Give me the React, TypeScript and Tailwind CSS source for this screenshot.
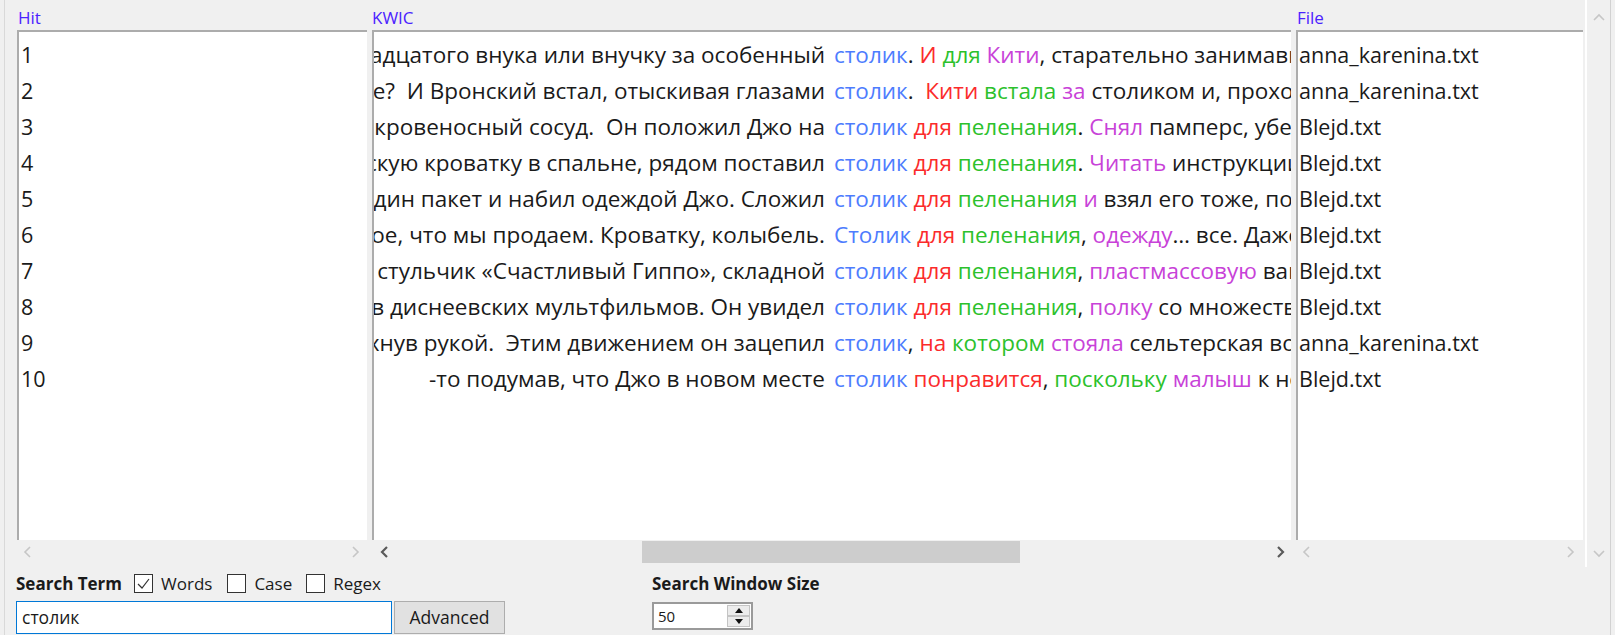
import React from 'react';

type Part = [string, ('b' | 'r' | 'g' | 'm')?];

const colorOf: Record<string, string> = {
  b: 'text-[#4d7cfe]',
  r: 'text-[#fb2b2b]',
  g: 'text-[#2cc12c]',
  m: 'text-[#c842d8]',
};

const rows: { left: string; right: Part[]; file: string }[] = [
  {
    left: 'бабушка обещала подарить тринадцатого внука или внучку за особенный',
    right: [['столик', 'b'], ['. '], ['И', 'r'], [' '], ['для', 'g'], [' '], ['Кити', 'm'], [', старательно занимавшуюся']],
    file: 'anna_karenina.txt',
  },
  {
    left: 'Что же вы не танцуете?  И Вронский встал, отыскивая глазами',
    right: [['столик', 'b'], ['.  '], ['Кити', 'r'], [' '], ['встала', 'g'], [' '], ['за', 'm'], [' столиком и, проходя']],
    file: 'anna_karenina.txt',
  },
  {
    left: 'будто лопнул кровеносный сосуд.  Он положил Джо на',
    right: [['столик', 'b'], [' '], ['для', 'r'], [' '], ['пеленания', 'g'], ['. '], ['Снял', 'm'], [' памперс, убедившись']],
    file: 'Blejd.txt',
  },
  {
    left: 'Собрал детскую кроватку в спальне, рядом поставил',
    right: [['столик', 'b'], [' '], ['для', 'r'], [' '], ['пеленания', 'g'], ['. '], ['Читать', 'm'], [' инструкции по']],
    file: 'Blejd.txt',
  },
  {
    left: 'Он взял еще один пакет и набил одеждой Джо. Сложил',
    right: [['столик', 'b'], [' '], ['для', 'r'], [' '], ['пеленания', 'g'], [' '], ['и', 'm'], [' взял его тоже, почти']],
    file: 'Blejd.txt',
  },
  {
    left: 'У нас есть все такое, что мы продаем. Кроватку, колыбель.',
    right: [['Столик', 'b'], [' '], ['для', 'r'], [' '], ['пеленания', 'g'], [', '], ['одежду', 'm'], ['… все. Даже']],
    file: 'Blejd.txt',
  },
  {
    left: 'Высокий стульчик «Счастливый Гиппо», складной',
    right: [['столик', 'b'], [' '], ['для', 'r'], [' '], ['пеленания', 'g'], [', '], ['пластмассовую', 'm'], [' ванночку']],
    file: 'Blejd.txt',
  },
  {
    left: 'с изображениями героев диснеевских мультфильмов. Он увидел',
    right: [['столик', 'b'], [' '], ['для', 'r'], [' '], ['пеленания', 'g'], [', '], ['полку', 'm'], [' со множеством']],
    file: 'Blejd.txt',
  },
  {
    left: 'он сказал, махнув рукой.  Этим движением он зацепил',
    right: [['столик', 'b'], [', '], ['на', 'r'], [' '], ['котором', 'g'], [' '], ['стояла', 'm'], [' сельтерская вода']],
    file: 'anna_karenina.txt',
  },
  {
    left: '-то подумав, что Джо в новом месте',
    right: [['столик', 'b'], [' '], ['понравится', 'r'], [', '], ['поскольку', 'g'], [' '], ['малыш', 'm'], [' к нему']],
    file: 'Blejd.txt',
  },
];

const Chevron = ({ dir, dark }: { dir: 'l' | 'r' | 'u' | 'd'; dark?: boolean }) => {
  const pts = {
    l: '7,1 2,6 7,11',
    r: '3,1 8,6 3,11',
    u: '1,8 6,3 11,8',
    d: '1,4 6,9 11,4',
  }[dir];
  return (
    <svg width="12" height="12" viewBox="0 0 12 12">
      <polyline points={pts} fill="none" stroke={dark ? '#5a5a5a' : '#c6c6c6'} strokeWidth={dark ? 2.2 : 1.6} />
    </svg>
  );
};

const Checkbox = ({ checked }: { checked?: boolean }) => (
  <div className="w-[19px] h-[19px] border border-[#333] bg-white flex items-center justify-center">
    {checked && (
      <svg width="15" height="15" viewBox="0 0 15 15">
        <polyline points="2,8 6,12 13,3" fill="none" stroke="#333" strokeWidth="1.2" />
      </svg>
    )}
  </div>
);

export default function App() {
  return (
    <div className="w-[1615px] h-[635px] bg-[#f0f0f0] flex font-['Open_Sans',sans-serif] text-[#1a1a1a] overflow-hidden">
      <div className="w-[4px]" />
      <div className="w-px bg-[#d9d9d9]" />
      <div className="w-[1580px] flex flex-col">
        {/* headers */}
        <div className="h-[30px] flex pl-[12px] text-[17px] text-[#4b22ff] leading-[20px] items-end pb-[2px]">
          <div className="w-[350px] pl-px">Hit</div>
          <div className="w-[5px]" />
          <div className="w-[919px]">KWIC</div>
          <div className="w-[5px]" />
          <div className="w-[287px] pl-px">File</div>
        </div>
        {/* panels */}
        <div className="h-[510px] flex pl-[12px] text-[21.5px]">
          <div className="w-[350px] bg-white border-t-2 border-l-2 border-[#acacac] pt-[5px] pl-[2px]">
            {rows.map((_, i) => (
              <div key={i} className="h-[36px] leading-[36px]">
                {i + 1}
              </div>
            ))}
          </div>
          <div className="w-[5px]" />
          <div className="w-[919px] bg-white border-t-2 border-l-2 border-[#acacac] pt-[5px] overflow-hidden text-[22.5px]">
            {rows.map((r, i) => (
              <div key={i} className="h-[36px] leading-[36px] flex whitespace-pre">
                <div className="w-[460px] shrink-0 flex justify-end overflow-hidden pr-[9px]">
                  <span className="shrink-0">{r.left}</span>
                </div>
                <div className="flex-1 overflow-hidden">
                  {r.right.map(([t, c], j) => (
                    <span key={j} className={c ? colorOf[c] : ''}>
                      {t}
                    </span>
                  ))}
                </div>
              </div>
            ))}
          </div>
          <div className="w-[5px]" />
          <div className="w-[287px] bg-white border-t-2 border-l-2 border-[#acacac] pt-[5px] pl-px">
            {rows.map((r, i) => (
              <div key={i} className="h-[36px] leading-[36px]">
                {r.file}
              </div>
            ))}
          </div>
        </div>
        {/* horizontal scrollbars */}
        <div className="h-[23px] flex pl-[12px]">
          <div className="w-[350px] flex items-center justify-between pl-[6px] pr-[5px]">
            <Chevron dir="l" />
            <Chevron dir="r" />
          </div>
          <div className="w-[5px]" />
          <div className="w-[919px] flex items-center pl-[8px]">
            <Chevron dir="l" dark />
            <div className="w-[250px]" />
            <div className="w-[378px] h-[22px] self-end bg-[#cdcdcd]" />
            <div className="flex-1" />
            <div className="pr-[4px]">
              <Chevron dir="r" dark />
            </div>
          </div>
          <div className="w-[5px]" />
          <div className="w-[287px] flex items-center justify-between pl-[6px] pr-[6px]">
            <Chevron dir="l" />
            <Chevron dir="r" />
          </div>
        </div>
        {/* controls */}
        <div className="flex pl-[11px]">
          <div className="flex flex-col">
            <div className="h-[38px] pt-[3px] flex items-center text-[17px]">
              <span className="font-bold mr-[12px]">Search Term</span>
              <Checkbox checked />
              <span className="ml-[8px] mr-[15px]">Words</span>
              <Checkbox />
              <span className="ml-[8px] mr-[14px]">Case</span>
              <Checkbox />
              <span className="ml-[8px]">Regex</span>
            </div>
            <div className="flex h-[33px]">
              <div className="w-[376px] h-[33px] bg-white border border-[#0078d7] flex items-center pl-[5px] text-[17.5px]">
                столик
              </div>
              <div className="w-[2px]" />
              <div className="w-[111px] h-[33px] bg-[#e1e1e1] border border-[#adadad] flex items-center justify-center text-[17.5px]">
                Advanced
              </div>
            </div>
          </div>
          <div className="ml-[147px] flex flex-col">
            <div className="h-[39px] pt-[3px] flex items-center text-[17px] font-bold">Search Window Size</div>
            <div className="w-[101px] h-[28px] bg-white border-2 border-[#9a9a9a] flex items-center">
              <span className="pl-[4px] text-[15px] flex-1">50</span>
              <div className="flex flex-col mr-px">
                <div className="w-[23px] h-[11px] bg-[#ececec] border border-[#c4c4c4] flex items-center justify-center">
                  <svg width="8" height="5" viewBox="0 0 8 5"><polygon points="0,5 4,0 8,5" fill="#111" /></svg>
                </div>
                <div className="w-[23px] h-[11px] bg-[#ececec] border border-[#c4c4c4] flex items-center justify-center">
                  <svg width="8" height="5" viewBox="0 0 8 5"><polygon points="0,0 8,0 4,5" fill="#111" /></svg>
                </div>
              </div>
            </div>
          </div>
        </div>
      </div>
      {/* vertical scrollbar */}
      <div className="w-[25px] h-[567px] border-l-2 border-white flex flex-col items-center justify-between pt-[12px] pb-[8px]">
        <Chevron dir="u" />
        <Chevron dir="d" />
      </div>
      <div className="w-px bg-[#d2d2d2]" />
    </div>
  );
}
